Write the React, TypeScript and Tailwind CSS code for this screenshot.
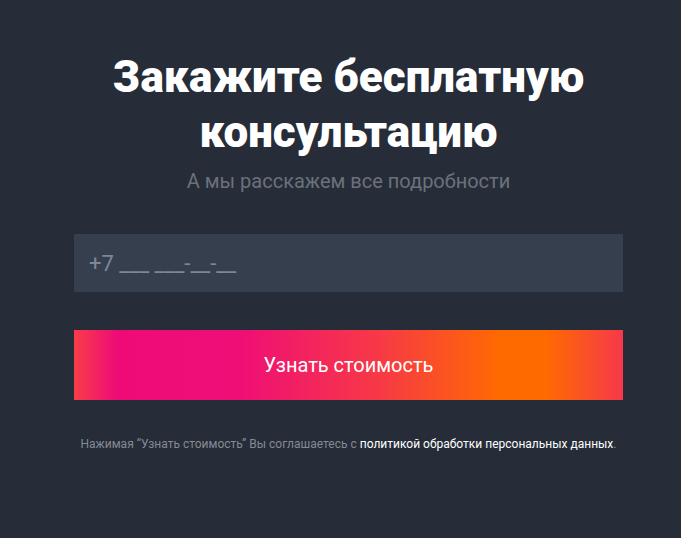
export default function App() {
  return (
    <div
      className="min-h-[538px] bg-[#262d38] pl-4 pt-[50px]"
      style={{ fontFamily: "Roboto, 'Liberation Sans', sans-serif" }}
    >
      <div className="mx-auto flex w-[549px] flex-col items-center">
        <h2 className="text-center text-[44px] font-black leading-[55px] text-white">
          Закажите бесплатную
          <br />
          консультацию
        </h2>
        <p className="mt-[6px] text-center text-[20px] text-[#6b717c]">
          А мы расскажем все подробности
        </p>

        <form className="mt-[38px] flex w-full flex-col" onSubmit={(e) => e.preventDefault()}>
          <input
            type="tel"
            placeholder="+7 ___ ___-__-__"
            className="h-[58px] w-full bg-[#363f4d] px-[15px] text-[22px] text-white outline-none placeholder:text-[#7c8898]"
          />
          <button
            type="submit"
            className="mt-[38px] h-[70px] w-full bg-[linear-gradient(90deg,#f83c48_0%,#ee0b78_8%,#ef0e76_30%,#f73a45_56%,#ff6a00_78%,#ff6a00_86%,#f6384a_100%)] text-[20px] text-white"
          >
            Узнать стоимость
          </button>
        </form>

        <p className="mt-[35px] whitespace-nowrap text-center text-[12px] text-[#858a93]">
          Нажимая “Узнать стоимость” Вы соглашаетесь с{" "}
          <a href="#" className="text-white">
            политикой обработки персональных данных
          </a>
          .
        </p>
      </div>
    </div>
  );
}
